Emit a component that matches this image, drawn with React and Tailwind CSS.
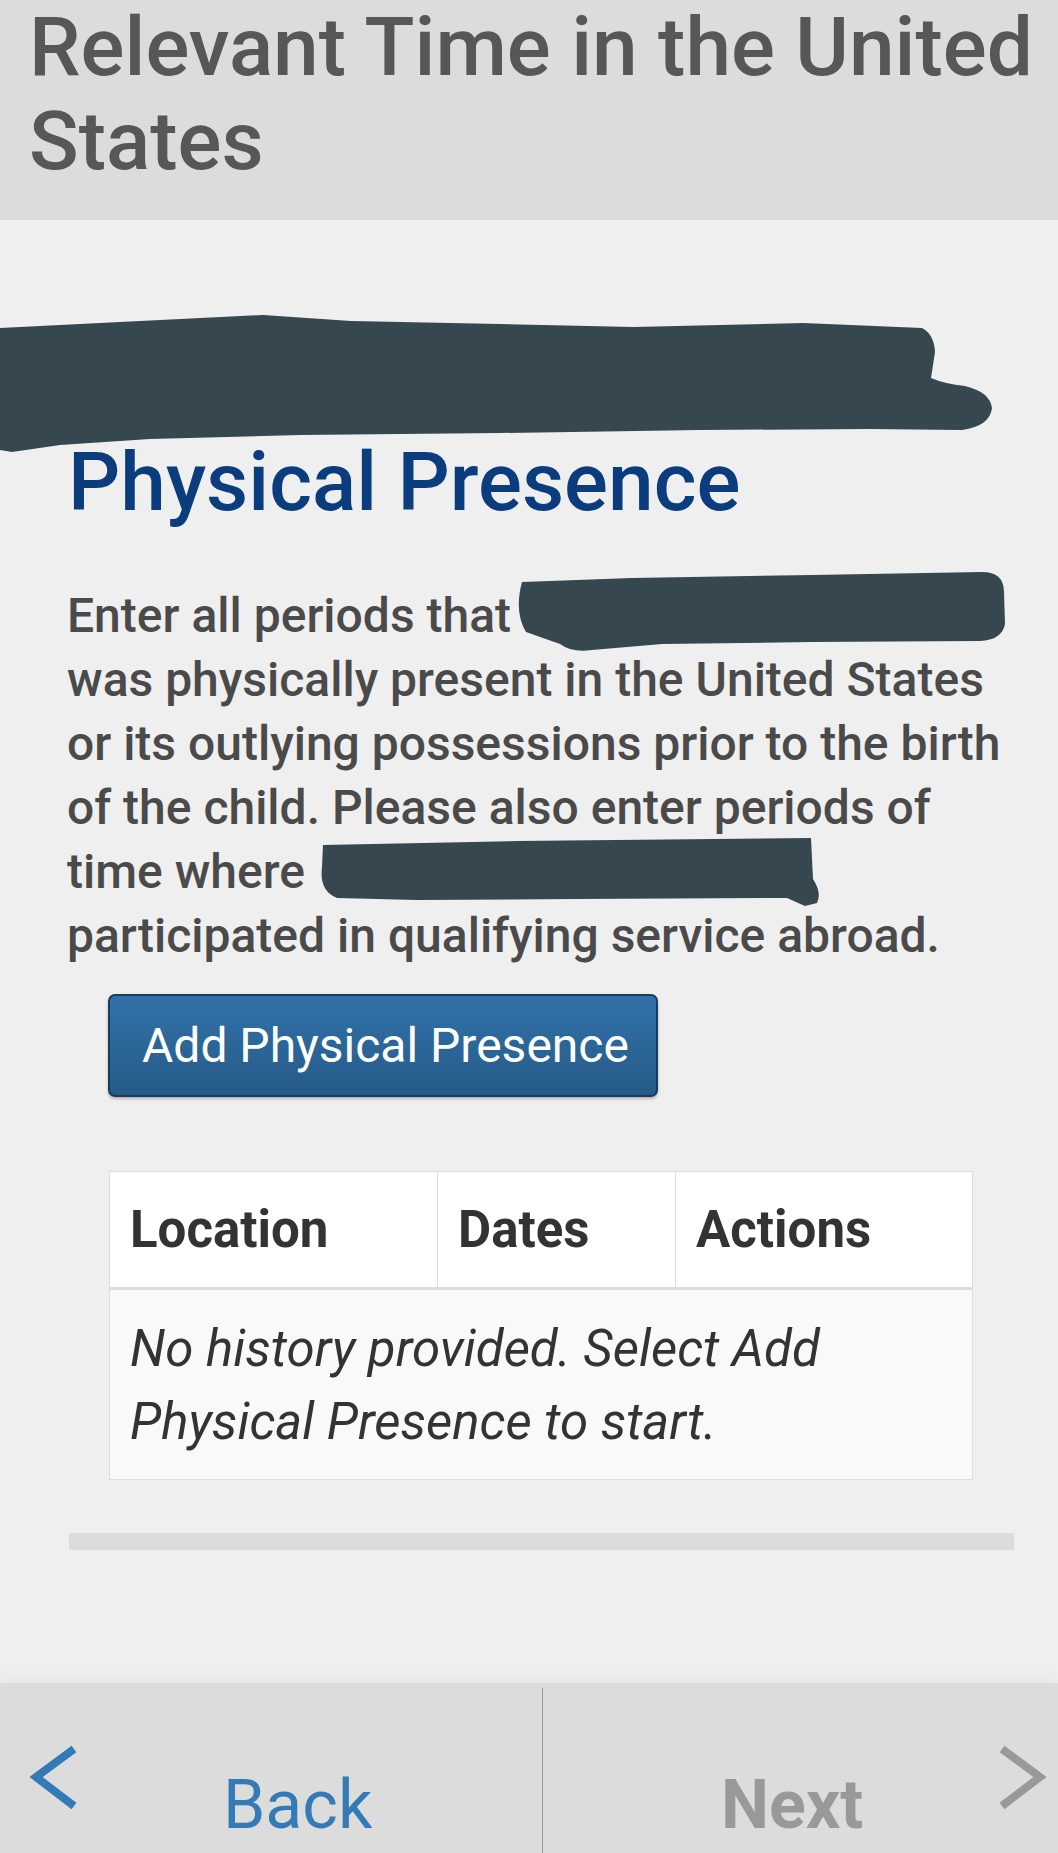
import React from 'react';

function Scribble({ className, width, height, d }) {
  return (
    <svg
      className={className}
      width={width}
      height={height}
      viewBox={`0 0 ${width} ${height}`}
      aria-hidden="true"
    >
      <path d={d} fill="#37474f" strokeLinejoin="round" />
    </svg>
  );
}

function Chevron({ dir, color, className }) {
  const points = dir === 'left' ? '44,4 6,32 44,61' : '6,4 44,32 6,61';
  return (
    <svg className={className} width="50" height="66" viewBox="0 0 50 66" aria-hidden="true">
      <polyline points={points} fill="none" stroke={color} strokeWidth="8" />
    </svg>
  );
}

function App() {
  return (
    <div className="flex min-h-screen flex-col bg-[#efefef] font-['Roboto',sans-serif]">
      {/* Page title */}
      <header className="bg-[#dcdcdc] pb-[32px] pl-[29px]">
        <h1 className="whitespace-nowrap text-[82px] font-medium leading-[94px] text-[#575757]">
          Relevant Time in the United
          <br />
          States
        </h1>
      </header>

      {/* Content */}
      <main className="relative flex-1">
        {/* redaction marks */}
        <Scribble
          className="absolute left-0 top-[92px]"
          width={1000}
          height={142}
          d="M0 16 L120 10 L263 3 L351 9 L500 12 L634 15 L803 11 L922 16 Q934 22 935 40 L931 66 Q945 72 965 74 Q990 80 992 96 Q990 114 962 118 L870 117 L700 118 L500 121 L300 123 L150 127 L60 133 L12 140 L0 138 Z"
        />
        <Scribble
          className="absolute left-[512px] top-[350px]"
          width={495}
          height={84}
          d="M10 12 L120 8 L300 5 L470 2 Q492 2 492 22 L493 54 Q490 70 468 71 L300 72 L150 74 L80 80 Q60 83 48 74 L14 62 Q2 42 10 12 Z"
        />
        <Scribble
          className="absolute left-[317px] top-[615px]"
          width={505}
          height={75}
          d="M6 10 L200 6 L494 3 L496 44 Q505 58 500 68 L488 71 L470 63 L260 64 L100 65 L20 63 Q2 56 5 32 Z"
        />

        <div className="pl-[67px] pt-[214px] pb-[132px]">
          <h2 className="ml-[1px] text-[82px] font-medium leading-[96px] text-[#0b3d7e]">Physical Presence</h2>

          <p className="mt-[54px] whitespace-nowrap text-[48px] font-medium leading-[64px] text-[#4a4a4a]">
            Enter all periods that
            <br />
            was physically present in the United States
            <br />
            or its outlying possessions prior to the birth
            <br />
            of the child. Please also enter periods of
            <br />
            time where
            <br />
            participated in qualifying service abroad.
          </p>

          <button className="ml-[41px] mt-[26px] flex h-[103px] w-[550px] items-center rounded-[7px] border-2 border-[#1a3a5e] bg-linear-to-b from-[#3172aa] to-[#265a88] pl-[32px] text-[48px] leading-[56px] text-white shadow-[0_2px_3px_rgba(0,0,0,0.25)]">
            Add Physical Presence
          </button>

          <table className="ml-[42px] mt-[74px] w-[864px] border-collapse">
            <thead>
              <tr className="bg-white">
                <th className="w-[328px] border border-b-[3px] border-[#dddddd] pb-[27px] pl-[20px] pt-[28px] text-left text-[51px] font-bold leading-[60px] text-[#333333]">
                  Location
                </th>
                <th className="w-[238px] border border-b-[3px] border-[#dddddd] pb-[27px] pl-[20px] pt-[28px] text-left text-[51px] font-bold leading-[60px] text-[#333333]">
                  Dates
                </th>
                <th className="border border-b-[3px] border-[#dddddd] pb-[27px] pl-[20px] pt-[28px] text-left text-[51px] font-bold leading-[60px] text-[#333333]">
                  Actions
                </th>
              </tr>
            </thead>
            <tbody>
              <tr className="bg-[#f9f9f9]">
                <td colSpan={3} className="border border-[#dddddd] pb-[21px] pl-[20px] pt-[22px] text-[51px] italic leading-[73px] text-[#333333]">
                  No history provided. Select Add
                  <br />
                  Physical Presence to start.
                </td>
              </tr>
            </tbody>
          </table>

          <div className="ml-[2px] mt-[53px] h-[17px] w-[945px] bg-[#dcdcdc]" />
        </div>
      </main>

      {/* Bottom navigation */}
      <footer className="flex h-[170px] bg-[#dcdcdc] shadow-[0_-8px_14px_rgba(0,0,0,0.03)]">
        <div className="flex w-[542px] items-start">
          <Chevron dir="left" color="#337ab7" className="ml-[30px] mt-[62px]" />
          <span className="ml-[143px] mt-[82px] text-[68px] leading-[80px] text-[#337ab7]">Back</span>
        </div>
        <div className="mt-[5px] w-px bg-[#9a9a9a]" />
        <div className="flex flex-1 items-start">
          <span className="ml-[178px] mt-[82px] text-[68px] font-bold leading-[80px] text-[#999999]">Next</span>
          <Chevron dir="right" color="#999999" className="ml-auto mr-[12px] mt-[62px]" />
        </div>
      </footer>
    </div>
  );
}

export default App;
